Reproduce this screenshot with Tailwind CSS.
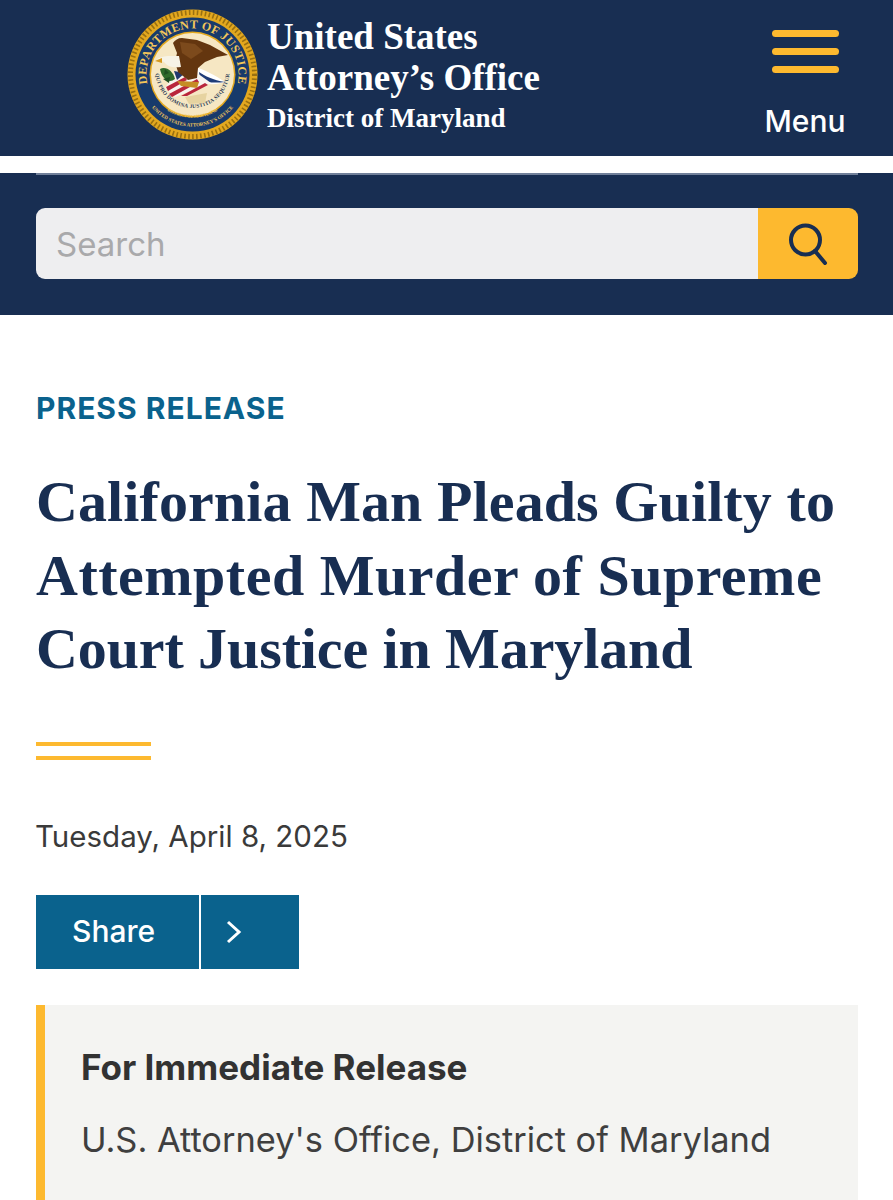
<!DOCTYPE html>
<html lang="en">
<head>
    <meta charset="UTF-8">
    <meta name="viewport" content="width=device-width, initial-scale=1.0">
    <title>California Man Pleads Guilty - U.S. Attorney's Office</title>
    <script src="https://cdn.jsdelivr.net/npm/@tailwindcss/browser@4"></script>
</head>
<body class="bg-white font-['Inter',sans-serif] w-[893px] h-[1200px] overflow-hidden">
    <!-- Header -->
    <header class="h-[156px] bg-[#182e52] flex">
        <div class="w-[127px] shrink-0"></div>
        <svg class="w-[131px] h-[131px] mt-[9px] shrink-0" viewBox="0 0 131 131">
            <defs>
                <path id="topArc" d="M 21.3 78.2 A 46 46 0 1 1 109.7 78.2"/>
                <path id="motto" d="M 28.5 62 A 37 37 0 0 0 102.5 62"/>
                <path id="lowArc" d="M 19 90 A 53 53 0 0 0 112 90"/>
                <path id="lowArc2" d="M 33 96 A 47.5 47.5 0 0 0 98 96"/>
            </defs>
            <circle cx="65.5" cy="65.5" r="65" fill="#e3a81f"/>
            <circle cx="65.5" cy="65.5" r="62" fill="none" stroke="#9a7010" stroke-width="5" stroke-dasharray="1.6 2.4"/>
            <circle cx="65.5" cy="65.5" r="57" fill="#173a6b"/>
            <circle cx="65.5" cy="65.5" r="43" fill="#e3a81f"/>
            <circle cx="65.5" cy="65.5" r="41.5" fill="#f6e7c3"/>
            <text font-family="Liberation Serif, serif" font-size="12" font-weight="700" fill="#f2c65a" letter-spacing="0.3"><textPath href="#topArc" startOffset="50%" text-anchor="middle">DEPARTMENT OF JUSTICE</textPath></text>
            <text font-family="Liberation Serif, serif" font-size="5" font-weight="700" fill="#f2c65a"><textPath href="#lowArc" startOffset="50%" text-anchor="middle">UNITED STATES ATTORNEY'S OFFICE</textPath></text>
            <text font-family="Liberation Serif, serif" font-size="4.2" font-weight="700" fill="#f2c65a"><textPath href="#lowArc2" startOffset="50%" text-anchor="middle">DISTRICT OF MARYLAND</textPath></text>
            <text font-family="Liberation Serif, serif" font-size="5.4" font-weight="700" fill="#2b3b55" letter-spacing="0.25"><textPath href="#motto" startOffset="50%" text-anchor="middle">QUI PRO DOMINA JUSTITIA SEQUITUR</textPath></text>
            <!-- rays under the eagle -->
            <path d="M58 88 L80 84 L78 94 L62 95 Z" fill="#e6d3a0"/>
            <!-- tail -->
            <path d="M68 58 C76 60 88 66 98 73 C90 76 78 76 68 72 Z" fill="#ffffff"/>
            <path d="M72 63 C78 67 86 71 98 73 C90 74 80 74 73 71 Z" fill="#1f3c78"/>
            <!-- shield -->
            <path d="M38 79 L50 61 L70 64 L84 74 L48 88 Z" fill="#f8f4ee"/>
            <path d="M39 78 L58 68 L60 71 L41 82 Z M42 85 L70 70 L72 73 L45 88 Z M54 87 L78 74 L81 76 L60 87 Z" fill="#b9263c"/>
            <path d="M47 62 L58 64 L50 71 Z" fill="#20386f"/>
            <!-- wing and body -->
            <path d="M46 34 C48 31 51 29 55 29 L70 31 L83 36 L101 46 L90 48 L78 53 L71 59 L70 69 L61 71 L51 63 L48 53 L50 44 Z" fill="#64360f"/>
            <path d="M53 33 L68 35 L76 42 L64 50 L55 44 Z" fill="#7c4a1c"/>
            <!-- head -->
            <path d="M30 50 C36 46 46 47 52 47 L54 58 C47 59 41 58 37 53 Z" fill="#f7f3e6"/>
            <path d="M35 49 L28 52 L35 54 Z" fill="#d69a20"/>
            <!-- olive branch -->
            <path d="M33 60 C39 57 46 62 48 70 C42 75 35 70 33 60 Z" fill="#2f6a2a"/>
            <path d="M38 60 L42 64 L37 66 Z M36 70 L43 68 L42 74 Z" fill="#1f4f20"/>
            <!-- arrows -->
            <path d="M50 72 L72 73 L70 79 L54 77 Z" fill="#c58d25"/>
        </svg>
        <div class="ml-[9px] pt-[16px] font-['Liberation_Serif',serif] text-white font-bold">
            <div class="text-[37px] leading-[41px]">United States</div>
            <div class="text-[37px] leading-[41px]">Attorney’s Office</div>
            <div class="text-[27px] leading-[40px]">District of Maryland</div>
        </div>
        <div class="ml-auto w-[136px] mr-[20px] flex flex-col items-center">
            <div class="mt-[30px] flex flex-col gap-[11px]">
                <div class="w-[67px] h-[7px] rounded-full bg-[#fdb92f]"></div>
                <div class="w-[67px] h-[7px] rounded-full bg-[#fdb92f]"></div>
                <div class="w-[67px] h-[7px] rounded-full bg-[#fdb92f]"></div>
            </div>
            <div class="mt-[30px] text-white text-[30px] leading-[36px] font-medium">Menu</div>
        </div>
    </header>

    <!-- Search -->
    <div class="mt-[17px] h-[142px] bg-[#182e52] pl-[36px] pr-[35px]">
        <div class="h-[2px] bg-[#71809a]"></div>
        <div class="mt-[33px] h-[71px] flex rounded-[9px] overflow-hidden">
            <div class="flex-1 bg-[#eeeef0] pl-[20px] pt-[2px] flex items-center text-[33px] text-[#a9a9ab]">Search</div>
            <div class="w-[100px] bg-[#fdb92f] flex items-center justify-center">
                <svg class="w-[40px] h-[44px]" viewBox="0 0 40 44" fill="none" stroke="#182e52" stroke-linecap="round">
                    <circle cx="17.5" cy="18" r="14.5" stroke-width="4"/>
                    <path d="M27 29 L37 41" stroke-width="4"/>
                </svg>
            </div>
        </div>
    </div>

    <!-- Article -->
    <main class="pl-[36px] pr-[35px]">
        <div class="mt-[75px] text-[30px] leading-[36px] font-bold tracking-[1px] text-[#0a628d]">PRESS RELEASE</div>
        <h1 class="mt-[39px] font-['Liberation_Serif',serif] font-bold text-[#182e52] text-[58px] leading-[73.5px]">
            <div class="tracking-[0.1px]">California Man Pleads Guilty to</div>
            <div class="tracking-[0.5px]">Attempted Murder of Supreme</div>
            <div class="tracking-[-0.1px]">Court Justice in Maryland</div>
        </h1>
        <div class="mt-[56px] w-[115px] h-[18px] border-y-[4px] border-[#fdb92f]"></div>
        <div class="mt-[58px] -ml-[1px] text-[29.5px] leading-[36px] text-[#3a3a3a]">Tuesday, April 8, 2025</div>
        <div class="mt-[41px] flex h-[74px] w-[263px] text-white">
            <div class="w-[163px] bg-[#0a628d] pl-[36px] flex items-center text-[30px] font-medium">Share</div>
            <div class="ml-[2px] flex-1 bg-[#0a628d] pl-[25px] flex items-center">
                <svg class="w-[16px] h-[24px]" viewBox="0 0 16 24" fill="none" stroke="white" stroke-width="3"><path d="M2 2 L13 12 L2 22"/></svg>
            </div>
        </div>
        <div class="mt-[36px] h-[195px] bg-[#f4f4f2] border-l-[9px] border-[#fdb92f] pl-[36px] pt-[42px]">
            <div class="text-[35px] leading-[40px] font-bold text-[#323232]">For Immediate Release</div>
            <div class="mt-[33px] text-[34.4px] leading-[40px] text-[#3f3f3f]">U.S. Attorney's Office, District of Maryland</div>
        </div>
    </main>
</body>
</html>
